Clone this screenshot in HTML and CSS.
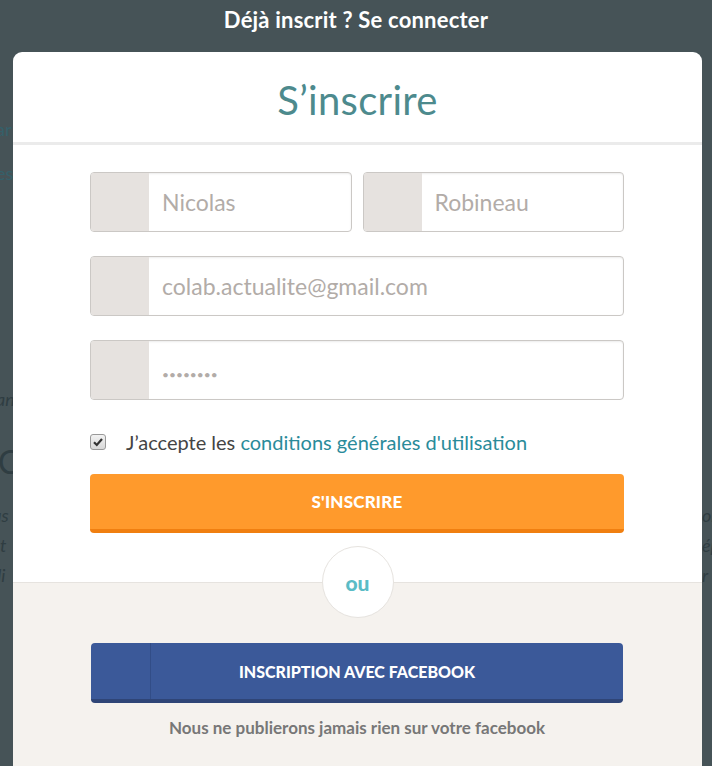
FILE: index.html
```html
<!DOCTYPE html>
<html lang="fr">
<head>
  <meta charset="UTF-8">
  <meta name="viewport" content="width=device-width, initial-scale=1.0">
  <title>S'inscrire</title>
  <link rel="stylesheet" href="styles.css">
</head>
<body>
  <div class="backdrop">
    <span class="bg-text bg-1">ar</span>
    <span class="bg-text bg-2">es</span>
    <span class="bg-text bg-3">an</span>
    <span class="bg-text bg-4">C</span>
    <span class="bg-text bg-5">us</span>
    <span class="bg-text bg-6">r t</span>
    <span class="bg-text bg-7">ali</span>
    <span class="bg-text bg-8">on</span>
    <span class="bg-text bg-9">ép</span>
    <span class="bg-text bg-10">r</span>
  </div>

  <div class="overlay">
    <div class="login-link">Déjà inscrit ? Se connecter</div>

    <div class="modal">
      <div class="modal-head">
        <h1>S’inscrire</h1>
      </div>

      <form class="form">
        <div class="row">
          <label class="field">
            <span class="field-icon"></span>
            <input type="text" placeholder="Nicolas">
          </label>
          <label class="field">
            <span class="field-icon"></span>
            <input type="text" placeholder="Robineau">
          </label>
        </div>
        <div class="row">
          <label class="field">
            <span class="field-icon"></span>
            <input type="email" placeholder="colab.actualite@gmail.com">
          </label>
        </div>
        <div class="row">
          <label class="field">
            <span class="field-icon"></span>
            <input type="password" class="pwd" placeholder="••••••••">
          </label>
        </div>

        <label class="terms">
          <span class="check">
            <svg viewBox="0 0 12 12" width="12" height="12"><path d="M2 6.2 L4.8 9 L10 3" fill="none" stroke="#333" stroke-width="2.2"/></svg>
          </span>
          <span>J’accepte les <a href="#">conditions générales d'utilisation</a></span>
        </label>

        <button type="button" class="btn-signup">S'INSCRIRE</button>
      </form>

      <div class="alt">
        <div class="or">ou</div>
        <button type="button" class="btn-fb">
          <span class="fb-icon"></span>
          <span class="fb-label">INSCRIPTION AVEC FACEBOOK</span>
        </button>
        <p class="note">Nous ne publierons jamais rien sur votre facebook</p>
      </div>
    </div>
  </div>
</body>
</html>
```

FILE: styles.css
```css
html, body {
  margin: 0;
  height: 100%;
}
body {
  background-color: #465357;
  font-family: "Lato", "Open Sans", sans-serif;
  overflow: hidden;
  position: relative;
}

/* page content behind the dark overlay */
.backdrop {
  position: absolute;
  inset: 0;
}
.bg-text {
  position: absolute;
  color: #2f3d42;
  font-size: 18px;
  font-style: italic;
}
.bg-1 { left: -4px; top: 118px; font-style: normal; color: #35606a; }
.bg-2 { left: -4px; top: 162px; font-style: normal; color: #35606a; }
.bg-3 { left: -4px; top: 388px; }
.bg-4 { left: -2px; top: 442px; font-size: 32px; font-style: normal; }
.bg-5 { left: -8px; top: 504px; }
.bg-6 { left: -10px; top: 534px; }
.bg-7 { left: -12px; top: 564px; }
.bg-8 { left: 702px; top: 504px; }
.bg-9 { left: 702px; top: 534px; }
.bg-10 { left: 702px; top: 564px; }

.overlay {
  position: relative;
}
.login-link {
  height: 52px;
  line-height: 40px;
  text-align: center;
  color: #fff;
  font-size: 22px;
  font-weight: 700;
  letter-spacing: 0.2px;
}

.modal {
  margin: 0 10px 0 13px;
  background: #fff;
  border-radius: 9px 9px 0 0;
  min-height: 720px;
  overflow: hidden;
}
.modal-head {
  height: 90px;
  border-bottom: 3px solid #ebebeb;
  text-align: center;
}
.modal-head h1 {
  margin: 0;
  padding-top: 23px;
  font-size: 40px;
  font-weight: 400;
  color: #4d8a8d;
  line-height: 50px;
  letter-spacing: 0.3px;
}

.form {
  padding: 27px 78px 0 77px;
}
.row {
  display: flex;
  gap: 11px;
  margin-bottom: 24px;
}
.field {
  flex: 1;
  display: flex;
  height: 58px;
  border: 1px solid #cbc8c5;
  border-radius: 4px;
  overflow: hidden;
  box-shadow: inset 0 1px 2px rgba(0, 0, 0, 0.08);
}
.field-icon {
  width: 58px;
  background: #e6e2df;
}
.field input {
  flex: 1;
  min-width: 0;
  border: none;
  outline: none;
  padding: 0 13px;
  font-family: inherit;
  font-size: 23px;
  color: #555;
  background: transparent;
}
.field input::placeholder {
  color: #b2aca8;
}
.field input.pwd::placeholder {
  font-size: 12px;
  letter-spacing: 0;
}

.terms {
  display: flex;
  align-items: center;
  gap: 20px;
  height: 32px;
  margin-top: 26px;
  font-size: 20px;
  color: #444;
}
.check {
  width: 14px;
  height: 14px;
  border: 1px solid #999;
  border-radius: 3px;
  background: linear-gradient(#f2f2f2, #d8d8d8);
  display: flex;
  align-items: center;
  justify-content: center;
}
.terms a {
  color: #2a8b9a;
  text-decoration: none;
}

.btn-signup {
  display: block;
  width: 100%;
  height: 59px;
  margin-top: 16px;
  border: none;
  border-bottom: 4px solid #f07f10;
  border-radius: 4px;
  background: #ff9a2c;
  color: #fff;
  font-family: inherit;
  font-size: 17px;
  font-weight: 900;
  letter-spacing: 0.2px;
}

.alt {
  position: relative;
  margin-top: 49px;
  border-top: 1px solid #e6e3df;
  background: #f5f2ee;
  padding: 60px 79px 0 78px;
  min-height: 200px;
}
.or {
  position: absolute;
  left: 50%;
  top: -37px;
  width: 70px;
  height: 70px;
  margin-left: -36px;
  border: 1px solid #e6e3df;
  border-radius: 50%;
  background: #fff;
  color: #5bbcc6;
  font-size: 21px;
  font-weight: 900;
  text-align: center;
  line-height: 72px;
}

.btn-fb {
  display: flex;
  width: 100%;
  height: 60px;
  padding: 0;
  border: none;
  border-bottom: 4px solid #2f4577;
  border-radius: 4px;
  background: #3b5999;
  color: #fff;
  font-family: inherit;
  overflow: hidden;
}
.fb-icon {
  width: 59px;
  height: 100%;
  border-right: 1px solid #324d87;
}
.fb-label {
  flex: 1;
  align-self: center;
  padding-right: 60px;
  font-size: 16px;
  font-weight: 900;
}

.note {
  margin: 14px 0 0;
  text-align: center;
  color: #777;
  font-size: 17px;
  font-weight: 700;
}
```
